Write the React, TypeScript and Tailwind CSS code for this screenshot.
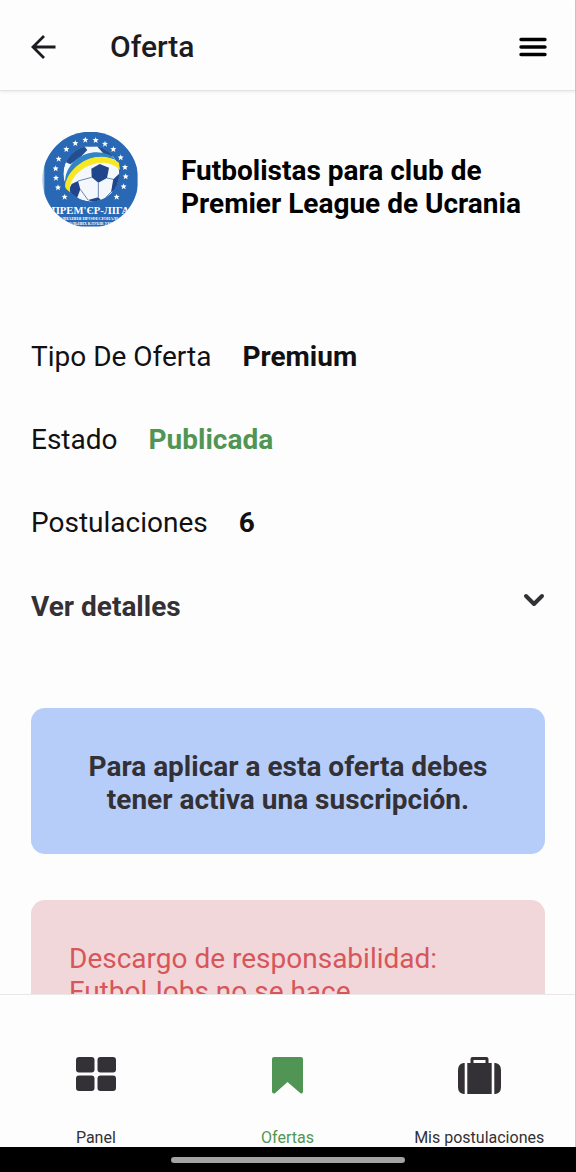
import type { ReactNode } from "react";

const starPoints = "0,-9 2,-3 9,-2 4,2 6,9 0,5 -6,9 -4,2 -9,-2 -2,-3";

const stars: [number, number][] = [
  [84, 202], [78, 173], [77, 145], [86, 116], [109, 87], [136, 69],
  [166, 59], [197, 60], [225, 71], [250, 87], [272, 112], [285, 141], [287, 169], [281, 199], [260, 230], [104, 230],
];

function ClubLogo() {
  return (
    <svg viewBox="36 36 288 288" className="size-24 shrink-0" role="img" aria-label="Прем'єр-Ліга">
      <defs>
        <clipPath id="badge"><circle cx="181" cy="179" r="144" /></clipPath>
        <clipPath id="ball"><circle cx="184" cy="161" r="84" /></clipPath>
      </defs>
      <g clipPath="url(#badge)">
        <rect x="36" y="30" width="290" height="290" fill="#a9c6e4" />
        <rect x="43" y="30" width="279" height="289" fill="#2868b4" />
        {stars.map(([x, y]) => (
          <polygon key={`${x}-${y}`} points={starPoints} transform={`translate(${x} ${y})`} fill="#fff" />
        ))}
        <g clipPath="url(#ball)">
          <circle cx="184" cy="161" r="84" fill="#f4f7fb" />
          <path d="M106 126L128 84L164 80L172 90L152 111L121 133Z" fill="#234f91" />
          <path d="M201 79L237 84L252 111L221 101Z" fill="#234f91" />
          <path d="M184 146L209 132L237 143L231 174L205 188L185 172Z" fill="#20458a" />
          <path d="M125 192L144 183L151 208L141 235L112 218Z" fill="#20458a" />
          <path d="M174 240L205 232L216 244L196 250Z" fill="#20458a" />
          <path d="M250 178L269 160V210L243 216Z" fill="#20458a" />
          <path d="M185 172L144 183M151 208L174 240M205 188L205 232M231 174L250 178M216 244L243 216M164 80L201 79" fill="none" stroke="#6487b6" strokeWidth="3" />
        </g>
        <path d="M106 174C120 100 211 72 263 122C202 97 153 117 126 163C118 178 119 192 121 207C108 201 103 189 106 174Z" fill="#3184c6" />
        <path d="M106 192C121 129 208 84 267 128L270 150C230 108 155 132 129 177C119 191 119 206 121 217C109 209 103 202 106 192Z" fill="#f8e824" />
        <text x="181" y="283" textAnchor="middle" fontSize="32" className="fill-white font-['Liberation_Serif',serif] font-bold">ПРЕМ'ЄР-ЛІГА</text>
        <text x="181" y="301" textAnchor="middle" fontSize="13" className="fill-white font-['Liberation_Serif',serif] font-bold">ОБ'ЄДНАННЯ ПРОФЕСІОНАЛЬНИХ</text>
        <text x="181" y="315" textAnchor="middle" fontSize="12" className="fill-white font-['Liberation_Serif',serif] font-bold">ФУТБОЛЬНИХ КЛУБІВ УКРАЇНИ</text>
      </g>
    </svg>
  );
}

function PanelIcon() {
  return (
    <svg viewBox="0 0 40 34" className="h-[34px] w-10" fill="currentColor" aria-hidden="true">
      <rect width="18.5" height="15.5" rx="3" />
      <rect x="21.5" width="18.5" height="15.5" rx="3" />
      <rect y="18.5" width="18.5" height="15.5" rx="3" />
      <rect x="21.5" y="18.5" width="18.5" height="15.5" rx="3" />
    </svg>
  );
}

function BookmarkIcon() {
  return (
    <svg viewBox="0 0 31 37" className="h-[37px] w-[31px]" fill="currentColor" aria-hidden="true">
      <path d="M2 0H29Q31 0 31 2V34.5Q31 37 28.5 36.2L15.5 25L3 36.2Q0 37 0 34.5V2Q0 0 2 0Z" />
    </svg>
  );
}

function SuitcaseIcon() {
  return (
    <svg viewBox="0 0 43 37" className="h-[37px] w-[43px]" fill="currentColor" aria-hidden="true">
      <path d="M6.7 6V37H5.5Q0 36 0 30V13Q0 7 5.5 6Z" />
      <path d="M36.3 6V37H37.5Q43 36 43 30V13Q43 7 37.5 6Z" />
      <path fillRule="evenodd" d="M9.3 6H12.5V2Q12.5 0 14.5 0H28.5Q30.5 0 30.5 2V6H33.7V37H9.3ZM15.5 3V6H27.5V3Z" />
    </svg>
  );
}

function Field({ label, children }: { label: string; children: ReactNode }) {
  return (
    <div className="flex gap-[31px]">
      <dt>{label}</dt>
      <dd className="font-bold">{children}</dd>
    </div>
  );
}

function Tab({ label, icon, active = false }: { label: string; icon: ReactNode; active?: boolean }) {
  return (
    <a
      href="#"
      aria-current={active ? "page" : undefined}
      className={`flex flex-1 flex-col items-center justify-between whitespace-nowrap text-base leading-[18px] ${active ? "text-[#509553]" : "text-[#333135]"}`}
    >
      <span className="flex h-[37px] items-start">{icon}</span>
      {label}
    </a>
  );
}

export default function App() {
  return (
    <div className="flex h-dvh flex-col bg-black font-[Roboto,sans-serif] text-[28px] leading-[33px] text-[#111113]">
      <div className="flex min-h-0 flex-1 flex-col border-r border-[#c9c8ca] bg-[#fefdfe]">
        <header className="z-10 flex h-[91px] shrink-0 items-center border-b border-[#e5e3e7] pt-[3px] pr-7 pl-[30px] shadow-[0_1px_3px_#00000014]">
          <button type="button" aria-label="Volver" className="text-[#1c1b1f]">
            <svg viewBox="0 0 26 26" className="size-[26px]" fill="none" stroke="currentColor" strokeWidth="2.8" aria-hidden="true">
              <path d="M25.5 13H3M14 2L3 13L14 24" />
            </svg>
          </button>
          <h1 className="ml-[54px] flex-1 text-[30px] font-medium text-[#1c1b1f]">Oferta</h1>
          <button type="button" aria-label="Menú" className="text-black">
            <svg viewBox="0 0 28 20" className="h-5 w-7" stroke="currentColor" strokeWidth="3.4" strokeLinecap="round" aria-hidden="true">
              <path d="M2 2.5H26M2 10H26M2 17.5H26" />
            </svg>
          </button>
        </header>

        <main className="min-h-0 flex-1 overflow-hidden pt-[41px] pr-[30px] pl-[31px]">
          <section className="flex items-start gap-[43px] pl-[11px]">
            <ClubLogo />
            <h2 className="min-w-0 flex-1 pt-[22px] font-bold text-black">
              Futbolistas para club de Premier League de Ucrania
            </h2>
          </section>

          <dl className="mt-28 flex flex-col gap-[50px]">
            <Field label="Tipo De Oferta">Premium</Field>
            <Field label="Estado"><span className="text-[#509553]">Publicada</span></Field>
            <Field label="Postulaciones">6</Field>
          </dl>
          <button type="button" aria-expanded="false" className="mt-[51px] flex w-full items-start justify-between font-bold text-[#333135]">
            Ver detalles
            <svg viewBox="0 0 22 20" className="h-5 w-[22px]" fill="none" stroke="currentColor" strokeWidth="4" strokeLinecap="round" strokeLinejoin="round" aria-hidden="true">
              <path d="M3 6L11 14L19 6" />
            </svg>
          </button>

          <p className="mt-[85px] rounded-[14px] bg-[#b7cdf9] px-10 pt-[42px] pb-[38px] text-center font-bold text-[#333135]">
            Para aplicar a esta oferta debes tener activa una suscripción.
          </p>
          <p className="mt-[46px] rounded-[14px] bg-[#f2d7da] p-[38px] pt-[42px] text-[#d65659]">
            Descargo de responsabilidad: FutbolJobs no se hace
          </p>
        </main>

        <nav className="flex h-[153px] shrink-0 border-t border-[#e9e7ea] pt-[62px]">
          <Tab label="Panel" icon={<PanelIcon />} />
          <Tab label="Ofertas" icon={<BookmarkIcon />} active />
          <Tab label="Mis postulaciones" icon={<SuitcaseIcon />} />
        </nav>
      </div>
      <div className="flex h-[25px] shrink-0 items-center justify-center">
        <div className="h-[6px] w-[234px] rounded-full bg-[#a5a4a5]" />
      </div>
    </div>
  );
}
